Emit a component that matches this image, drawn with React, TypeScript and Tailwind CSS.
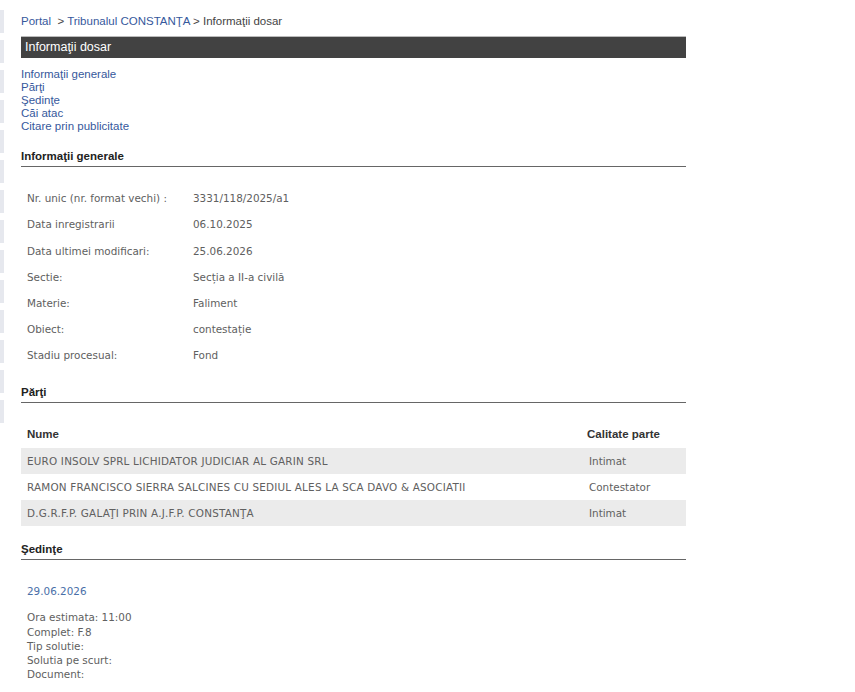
const info: [string, string][] = [
  ["Nr. unic (nr. format vechi) :", "3331/118/2025/a1"],
  ["Data inregistrarii", "06.10.2025"],
  ["Data ultimei modificari:", "25.06.2026"],
  ["Sectie:", "Secția a II-a civilă"],
  ["Materie:", "Faliment"],
  ["Obiect:", "contestație"],
  ["Stadiu procesual:", "Fond"],
];

const parti: [string, string][] = [
  ["EURO INSOLV SPRL LICHIDATOR JUDICIAR AL GARIN SRL", "Intimat"],
  ["RAMON FRANCISCO SIERRA SALCINES CU SEDIUL ALES LA SCA DAVO & ASOCIATII", "Contestator"],
  ["D.G.R.F.P. GALAŢI PRIN A.J.F.P. CONSTANŢA", "Intimat"],
];

const sedinta = ["Ora estimata: 11:00", "Complet: F.8", "Tip solutie:", "Solutia pe scurt:", "Document:"];

const navLinks = ["Informaţii generale", "Părţi", "Şedinţe", "Căi atac", "Citare prin publicitate"];

const body = "font-['DejaVu_Sans',Verdana,sans-serif] text-[10.4px] text-[#606060]";

function SectionTitle({ children }: { children: React.ReactNode }) {
  return (
    <div className="border-b border-[#666] pb-[3px] text-[11.5px] font-bold leading-[14px] text-[#222]">
      {children}
    </div>
  );
}

export default function App() {
  return (
    <div className="relative min-h-[692px] bg-white font-['Liberation_Sans',Arial,sans-serif]">
      {/* faint side strip */}
      <div className="absolute left-0 top-[10px] flex w-[4px] flex-col gap-[7px]">
        {Array.from({ length: 14 }).map((_, i) => (
          <div key={i} className="h-[23px] bg-[#e6e8ee]" />
        ))}
      </div>

      <div className="ml-[21px] w-[665px] pt-[14px]">
        <div className="text-[11.5px] leading-[14px] text-[#444]">
          <span className="text-[#36589c]">Portal</span>
          <span> &nbsp;&gt; </span>
          <span className="text-[#36589c]">Tribunalul CONSTANŢA</span>
          <span> &gt; Informaţii dosar</span>
        </div>

        <div className="mt-[8px] flex h-[22px] items-center border-t border-[#bbb] bg-[#424242] px-[4px] text-[12.5px] text-white">
          Informaţii dosar
        </div>

        <div className="mt-[10px] flex flex-col text-[11.5px] leading-[13px] text-[#36589c]">
          {navLinks.map((l) => (
            <span key={l}>{l}</span>
          ))}
        </div>

        <div className="mt-[16px]">
          <SectionTitle>Informaţii generale</SectionTitle>
        </div>

        <div className={`mt-[19px] ${body}`}>
          {info.map(([k, v]) => (
            <div key={k} className="flex h-[26.2px] items-center pl-[6px]">
              <span className="w-[166px]">{k}</span>
              <span>{v}</span>
            </div>
          ))}
        </div>

        <div className="mt-[16px]">
          <SectionTitle>Părţi</SectionTitle>
        </div>

        <div className="mt-[17px]">
          <div className="flex h-[28px] items-center text-[11.5px] font-bold text-[#333]">
            <span className="w-[566px] pl-[6px]">Nume</span>
            <span>Calitate parte</span>
          </div>
          <div className={body}>
            {parti.map(([n, c], i) => (
              <div key={n} className={`flex h-[26px] items-center ${i % 2 === 0 ? "bg-[#ebebeb]" : "bg-white"}`}>
                <span className="w-[568px] pl-[6px] tracking-[0.2px]">{n}</span>
                <span>{c}</span>
              </div>
            ))}
          </div>
        </div>

        <div className="mt-[16px]">
          <SectionTitle>Şedinţe</SectionTitle>
        </div>

        <div className={`mt-[24px] pl-[6px] ${body}`}>
          <div className="leading-[14px] text-[#4a6fa8]">29.06.2026</div>
          <div className="mt-[12px] flex flex-col leading-[14.2px]">
            {sedinta.map((s) => (
              <span key={s}>{s}</span>
            ))}
          </div>
        </div>
      </div>
    </div>
  );
}
